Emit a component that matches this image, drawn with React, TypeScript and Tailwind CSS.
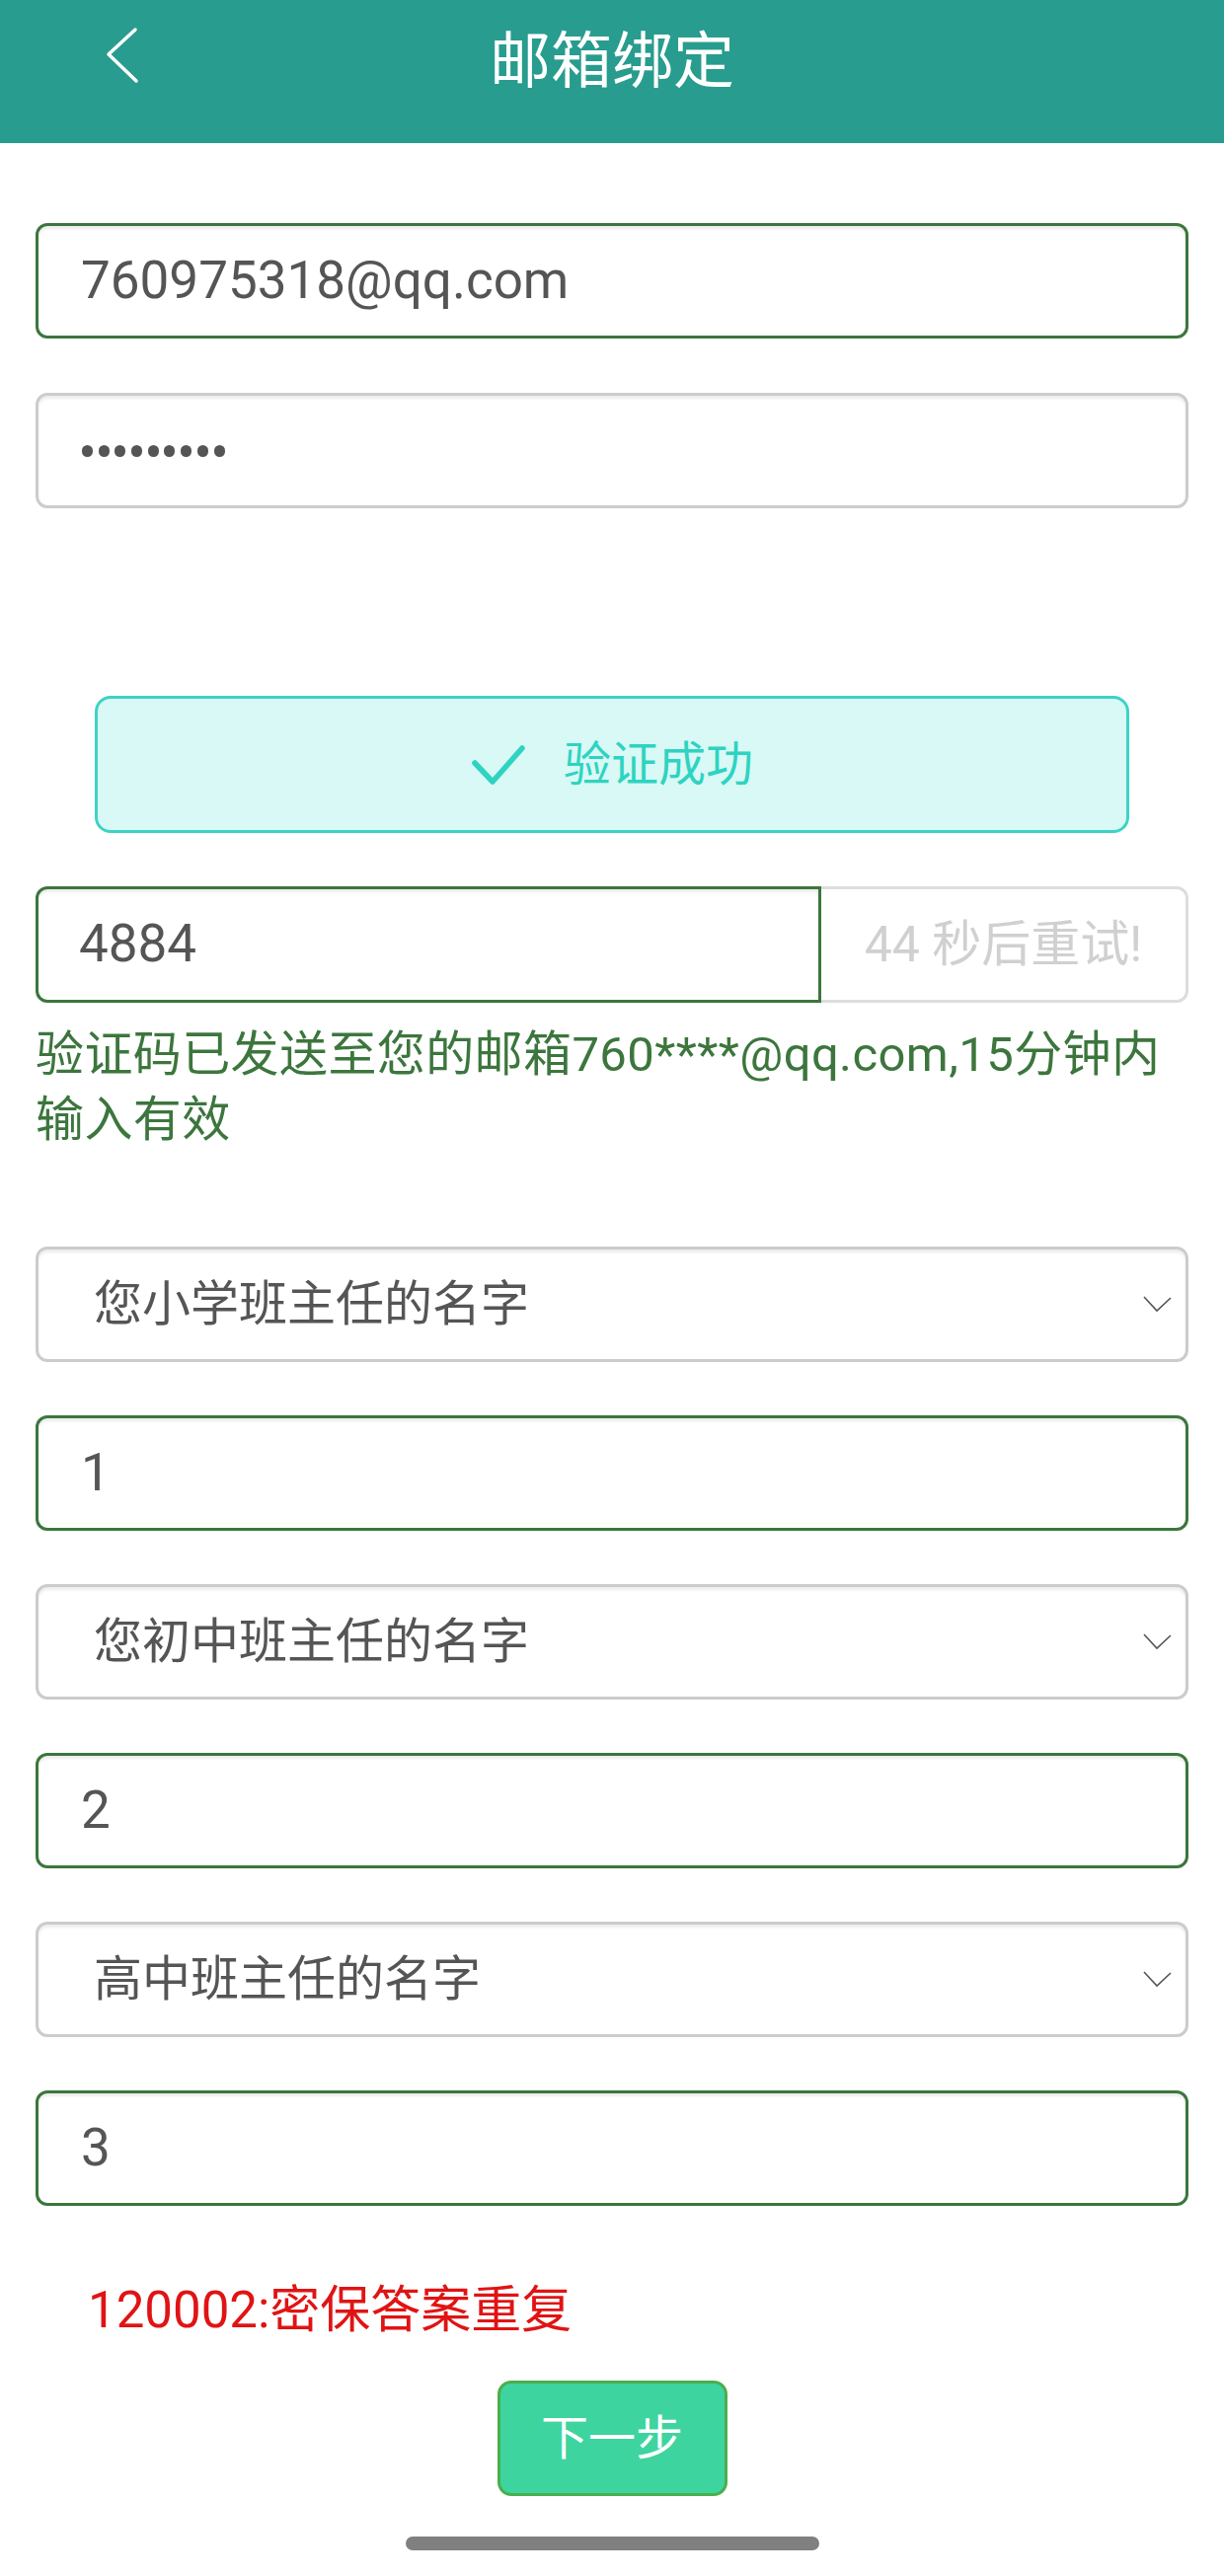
import { type ReactNode } from "react";

function Field({ children, tone = "green" }: { children: ReactNode; tone?: "green" | "gray" }) {
  const border = tone === "green" ? "border-[#3c763d]" : "border-[#cccccc]";
  return (
    <div
      className={`flex h-[117px] items-center rounded-[12px] border-[3px] ${border} pl-[43px] text-[53px] text-[#555555] shadow-[inset_0_3px_3px_rgba(0,0,0,0.075)]`}
    >
      {children}
    </div>
  );
}

function Select({ label }: { label: string }) {
  return (
    <div className="flex h-[117px] items-center justify-between rounded-[12px] border-[3px] border-[#cccccc] pl-[56px] pr-[13px] text-[49px] text-[#555555] shadow-[inset_0_3px_3px_rgba(0,0,0,0.075)]">
      <span>{label}</span>
      <svg width="31" height="19" viewBox="0 0 31 19" fill="none">
        <path d="M2 2 L15 16 L29 3" stroke="#555555" strokeWidth="1.6" />
      </svg>
    </div>
  );
}

export default function App() {
  return (
    <div className="min-h-[2610px] bg-white font-['Roboto','Noto_Sans_CJK_SC',sans-serif]">
      <header className="grid h-[145px] grid-cols-[1fr_auto_1fr] items-start bg-[#289c8e] text-white">
        <div className="pl-[107px] pt-[27px]">
          <svg width="34" height="58" viewBox="0 0 34 58" fill="none">
            <path
              d="M30 3 L3 28 L31 55"
              stroke="white"
              strokeWidth="3.5"
              strokeLinecap="round"
              strokeLinejoin="round"
            />
          </svg>
        </div>
        <h1 className="pt-[32px] text-[62px] leading-[62px]">邮箱绑定</h1>
        <div />
      </header>

      <main className="flex flex-col px-[36px]">
        <div className="mt-[81px] flex flex-col gap-[55px]">
          <Field>760975318@qq.com</Field>
          <Field tone="gray">
            <div className="flex gap-[5.7px] pl-[1px]">
              {Array.from({ length: 9 }).map((_, i) => (
                <span key={i} className="h-[12px] w-[11px] rounded-full bg-[#555555]" />
              ))}
            </div>
          </Field>
        </div>

        <div className="mx-[60px] mt-[190px] flex h-[139px] items-center justify-center gap-[38px] rounded-[16px] border-[3px] border-[#3dd3c4] bg-[#d8f9f5]">
          <svg width="56" height="42" viewBox="0 0 56 42" fill="none">
            <path
              d="M4 19 L22 38 L52 4"
              stroke="#2ed3c1"
              strokeWidth="5.5"
              strokeLinecap="round"
              strokeLinejoin="round"
            />
          </svg>
          <span className="text-[48px] text-[#2ed3c1]">验证成功</span>
        </div>

        <div className="mt-[54px] flex h-[118px]">
          <div className="flex flex-1 items-center rounded-l-[12px] border-[3px] border-[#3c763d] pl-[41px] text-[53px] text-[#555555] shadow-[inset_0_3px_3px_rgba(0,0,0,0.075)]">
            4884
          </div>
          <div className="flex w-[372px] items-center justify-center rounded-r-[12px] border-[3px] border-l-0 border-[#dddddd] text-[50px] text-[#d0d0d0]">
            44 秒后重试!
          </div>
        </div>

        <p className="mt-[20px] text-[49px] leading-[66px] tracking-[0.4px] text-[#3c763d]">
          验证码已发送至您的邮箱760****@qq.com,15分钟内
          <br />
          输入有效
        </p>

        <div className="mt-[95px] flex flex-col gap-[54px]">
          <Select label="您小学班主任的名字" />
          <Field>1</Field>
          <Select label="您初中班主任的名字" />
          <Field>2</Field>
          <Select label="高中班主任的名字" />
          <Field>3</Field>
        </div>

        <p className="mt-[76px] pl-[53px] text-[51px] leading-[60px] text-[#e01414]">120002:密保答案重复</p>

        <button className="mx-auto mt-[41px] flex h-[117px] w-[233px] items-center justify-center rounded-[14px] border-[3px] border-[#4cae4c] bg-[#3dd4a0] text-[48px] text-white">
          下一步
        </button>

        <div className="mx-auto mt-[41px] h-[14px] w-[419px] rounded-full bg-[#808080]" />
      </main>
    </div>
  );
}
